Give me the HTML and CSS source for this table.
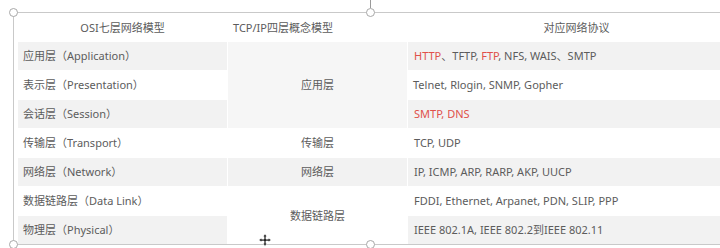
FILE: index.html
```html
<!DOCTYPE html>
<html lang="zh-CN">
<head>
<meta charset="utf-8">
<title>OSI</title>
<link rel="stylesheet" href="styles.css">
</head>
<body>
<div class="stage">
  <div class="frame">
    <table class="osi">
      <colgroup><col class="c1"><col class="c2"><col class="c3"></colgroup>
      <tr class="head">
        <td class="center">OSI七层网络模型</td>
        <td>TCP/IP四层概念模型</td>
        <td class="center">对应网络协议</td>
      </tr>
      <tr class="alt">
        <td>应用层（Application）</td>
        <td class="center mid-gray" rowspan="3">应用层</td>
        <td><span class="red">HTTP</span>、TFTP, <span class="red">FTP</span>, NFS, WAIS、SMTP</td>
      </tr>
      <tr>
        <td>表示层（Presentation）</td>
        <td>Telnet, Rlogin, SNMP, Gopher</td>
      </tr>
      <tr class="alt">
        <td>会话层（Session）</td>
        <td><span class="red">SMTP, DNS</span></td>
      </tr>
      <tr>
        <td>传输层（Transport）</td>
        <td class="center">传输层</td>
        <td>TCP, UDP</td>
      </tr>
      <tr class="alt">
        <td>网络层（Network）</td>
        <td class="center">网络层</td>
        <td>IP, ICMP, ARP, RARP, AKP, UUCP</td>
      </tr>
      <tr>
        <td>数据链路层（Data Link）</td>
        <td class="center mid-white" rowspan="2">数据链路层</td>
        <td>FDDI, Ethernet, Arpanet, PDN, SLIP, PPP</td>
      </tr>
      <tr class="alt">
        <td>物理层（Physical）</td>
        <td>IEEE 802.1A, IEEE 802.2到IEEE 802.11</td>
      </tr>
    </table>
  </div>
  <span class="rot-line"></span>
  <span class="handle h-tl"></span>
  <span class="handle h-tm"></span>
  <span class="handle h-bl"></span>
  <span class="handle h-bm"></span>
  <svg class="cursor" width="14" height="14" viewBox="0 0 16 16">
    <g fill="#111" stroke="#fff" stroke-width="0.6">
      <path d="M8 1 L10 4 L9 4 L9 7 L12 7 L12 6 L15 8 L12 10 L12 9 L9 9 L9 12 L10 12 L8 15 L6 12 L7 12 L7 9 L4 9 L4 10 L1 8 L4 6 L4 7 L7 7 L7 4 L6 4 Z"/>
    </g>
  </svg>
</div>
</body>
</html>
```

FILE: styles.css
```css
html, body {
  margin: 0;
  padding: 0;
  background: #ffffff;
  overflow: hidden;
}
body {
  width: 720px;
  height: 248px;
  font-family: "Noto Sans", "Noto Sans CJK SC", sans-serif;
  font-size: 11px;
  color: #5c5c5c;
}
.stage {
  position: relative;
  width: 720px;
  height: 248px;
  padding: 12px 0 0 13px;
  box-sizing: border-box;
  overflow: hidden;
}
.frame {
  width: 707px;
  height: 233px;
  border-top: 1px solid #c9c9c9;
  border-left: 1px solid #c9c9c9;
  border-bottom: 1px solid #c9c9c9;
  box-sizing: border-box;
  padding-left: 3px;
  overflow: hidden;
}
.osi {
  border-collapse: collapse;
  table-layout: fixed;
  width: 728px;
}
.c1 { width: 210px; }
.c2 { width: 180px; }
.c3 { width: 338px; }
.osi td {
  height: 28px;
  padding: 0 0 0 5px;
  border: 1px solid #ffffff;
  background: #ffffff;
  white-space: nowrap;
  vertical-align: middle;
  line-height: 14px;
}
.osi td:nth-child(3), .osi tr.alt td:last-child { padding-left: 6px; }
.osi tr.head td { height: 27px; }
.osi tr.alt td { background: #f2f2f2; }
.osi td.center { text-align: center; padding-left: 0; }
.osi tr td.mid-gray { background: #f6f6f6; }
.osi tr td.mid-white { background: #ffffff; }
.red { color: #e0504a; }
.handle {
  position: absolute;
  width: 7px;
  height: 7px;
  border: 1px solid #a8a8a8;
  border-radius: 50%;
  background: #ffffff;
}
.h-tl { left: 9px; top: 8px; }
.h-tm { left: 366px; top: 8px; }
.h-bl { left: 9px; top: 240px; }
.h-bm { left: 366px; top: 240px; }
.rot-line {
  position: absolute;
  left: 370px;
  top: 0;
  width: 1px;
  height: 8px;
  background: #9a9a9a;
}
.cursor {
  position: absolute;
  left: 258px;
  top: 233px;
}
```
